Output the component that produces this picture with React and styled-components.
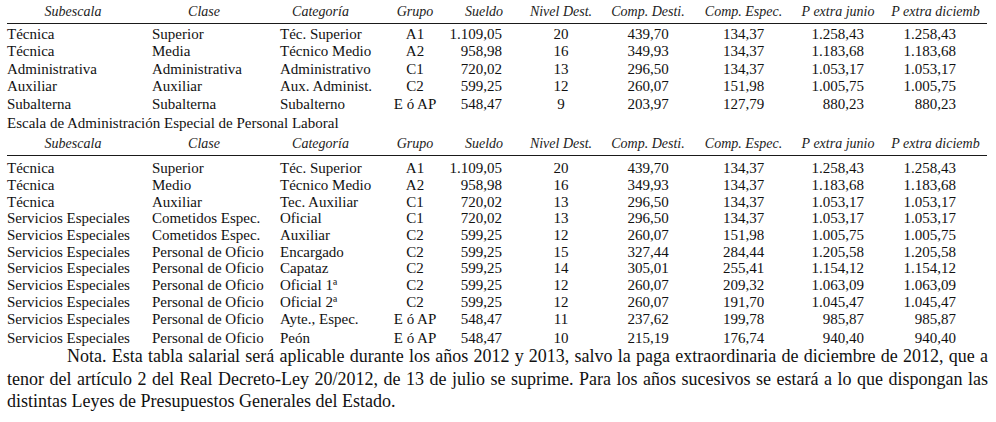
import React from 'react';
import styled, { createGlobalStyle } from 'styled-components';

const GlobalStyle = createGlobalStyle`
  html, body {
    margin: 0;
    padding: 0;
    background: #ffffff;
  }
  body {
    font-family: "Liberation Serif", "Times New Roman", serif;
    color: #111111;
  }
`;

// column layout: width, data alignment/padding, header padding (header is always centered)
const columns = [
  { key: 'subescala', title: 'Subescala', w: 132, align: 'left', pl: 0, pr: 0, hpl: 0 },
  { key: 'clase', title: 'Clase', w: 130, align: 'left', pl: 13, pr: 0, hpl: 0 },
  { key: 'categoria', title: 'Categoría', w: 103, align: 'left', pl: 11, pr: 0, hpl: 0 },
  { key: 'grupo', title: 'Grupo', w: 74, align: 'center', pl: 12, pr: 0, hpl: 12 },
  { key: 'sueldo', title: 'Sueldo', w: 64, align: 'right', pl: 0, pr: 8, hpl: 12 },
  { key: 'nivel', title: 'Nivel Dest.', w: 95, align: 'center', pl: 7, pr: 0, hpl: 7 },
  { key: 'desti', title: 'Comp. Desti.', w: 86, align: 'center', pl: 0, pr: 0, hpl: 0 },
  { key: 'espec', title: 'Comp. Espec.', w: 105, align: 'center', pl: 0, pr: 0, hpl: 0 },
  { key: 'junio', title: 'P extra junio', w: 84, align: 'right', pl: 0, pr: 16, hpl: 0 },
  { key: 'diciembre', title: 'P extra diciemb', w: 107, align: 'right', pl: 0, pr: 31, hpl: 4 },
];

const template = columns.map((c) => `${c.w}px`).join(' ');

const generalRows = [
  ['Técnica', 'Superior', 'Téc. Superior', 'A1', '1.109,05', '20', '439,70', '134,37', '1.258,43', '1.258,43'],
  ['Técnica', 'Media', 'Técnico Medio', 'A2', '958,98', '16', '349,93', '134,37', '1.183,68', '1.183,68'],
  ['Administrativa', 'Administrativa', 'Administrativo', 'C1', '720,02', '13', '296,50', '134,37', '1.053,17', '1.053,17'],
  ['Auxiliar', 'Auxiliar', 'Aux. Administ.', 'C2', '599,25', '12', '260,07', '151,98', '1.005,75', '1.005,75'],
  ['Subalterna', 'Subalterna', 'Subalterno', 'E ó AP', '548,47', '9', '203,97', '127,79', '880,23', '880,23'],
];

const laboralRows = [
  ['Técnica', 'Superior', 'Téc. Superior', 'A1', '1.109,05', '20', '439,70', '134,37', '1.258,43', '1.258,43'],
  ['Técnica', 'Medio', 'Técnico Medio', 'A2', '958,98', '16', '349,93', '134,37', '1.183,68', '1.183,68'],
  ['Técnica', 'Auxiliar', 'Tec. Auxiliar', 'C1', '720,02', '13', '296,50', '134,37', '1.053,17', '1.053,17'],
  ['Servicios Especiales', 'Cometidos Espec.', 'Oficial', 'C1', '720,02', '13', '296,50', '134,37', '1.053,17', '1.053,17'],
  ['Servicios Especiales', 'Cometidos Espec.', 'Auxiliar', 'C2', '599,25', '12', '260,07', '151,98', '1.005,75', '1.005,75'],
  ['Servicios Especiales', 'Personal de Oficio', 'Encargado', 'C2', '599,25', '15', '327,44', '284,44', '1.205,58', '1.205,58'],
  ['Servicios Especiales', 'Personal de Oficio', 'Capataz', 'C2', '599,25', '14', '305,01', '255,41', '1.154,12', '1.154,12'],
  ['Servicios Especiales', 'Personal de Oficio', 'Oficial 1ª', 'C2', '599,25', '12', '260,07', '209,32', '1.063,09', '1.063,09'],
  ['Servicios Especiales', 'Personal de Oficio', 'Oficial 2ª', 'C2', '599,25', '12', '260,07', '191,70', '1.045,47', '1.045,47'],
  ['Servicios Especiales', 'Personal de Oficio', 'Ayte., Espec.', 'E ó AP', '548,47', '11', '237,62', '199,78', '985,87', '985,87'],
  ['Servicios Especiales', 'Personal de Oficio', 'Peón', 'E ó AP', '548,47', '10', '215,19', '176,74', '940,40', '940,40'],
];

const SalaryTable = ({ rows, rowHeight, bodyTop, lastGap }) => (
  <Table>
    <HeadRow>
      {columns.map((c) => (
        <HeadCell key={c.key} $pl={c.hpl}>
          {c.title}
        </HeadCell>
      ))}
    </HeadRow>
    <Body $top={bodyTop}>
      {rows.map((row, i) => (
        <Row key={i} $h={rowHeight} $gap={i === rows.length - 1 ? lastGap : 0}>
          {row.map((value, j) => (
            <Cell
              key={columns[j].key}
              $align={columns[j].align}
              $pl={columns[j].pl}
              $pr={columns[j].pr}
            >
              {value}
            </Cell>
          ))}
        </Row>
      ))}
    </Body>
  </Table>
);

const App = () => (
  <>
    <GlobalStyle />
    <Page>
      <SalaryTable rows={generalRows} rowHeight={17.25} bodyTop={2} lastGap={0.5} />
      <Caption>Escala de Administración Especial de Personal Laboral</Caption>
      <SalaryTable rows={laboralRows} rowHeight={16.7} bodyTop={4.6} lastGap={3} />
      <Note>
        <NoteLine $first>
          Nota. Esta tabla salarial será aplicable durante los años 2012 y 2013, salvo la paga
          extraordinaria de diciembre de 2012, que a
        </NoteLine>
        <NoteLine>
          tenor del artículo 2 del Real Decreto-Ley 20/2012, de 13 de julio se suprime. Para los
          años sucesivos se estará a lo que dispongan las
        </NoteLine>
        <NoteLine $last>distintas Leyes de Presupuestos Generales del Estado.</NoteLine>
      </Note>
    </Page>
  </>
);

const Page = styled.div`
  width: 996px;
  height: 422px;
  box-sizing: border-box;
  padding: 0 8px 0 7px;
  overflow: hidden;
`;

const Table = styled.div`
  width: 980px;
`;

const HeadRow = styled.div`
  display: grid;
  grid-template-columns: ${template};
  padding: 3px 0;
  border-bottom: 1px solid #1a1a1a;
`;

const HeadCell = styled.div`
  padding-left: ${(p) => p.$pl}px;
  text-align: center;
  font-style: italic;
  font-size: 14px;
  line-height: 17px;
  color: #222222;
  white-space: nowrap;
`;

const Body = styled.div`
  padding-top: ${(p) => p.$top}px;
`;

const Row = styled.div`
  display: grid;
  grid-template-columns: ${template};
  height: ${(p) => p.$h}px;
  margin-top: ${(p) => p.$gap}px;
  align-items: center;
`;

const Cell = styled.div`
  padding-left: ${(p) => p.$pl}px;
  padding-right: ${(p) => p.$pr}px;
  text-align: ${(p) => p.$align};
  font-size: 15px;
  line-height: 17px;
  white-space: nowrap;
`;

const Caption = styled.div`
  padding-top: 1px;
  font-size: 15px;
  line-height: 18px;
`;

const Note = styled.div`
  margin-top: -1.5px;
  width: 981px;
  font-size: 18px;
  line-height: 22.5px;
`;

const NoteLine = styled.div`
  text-indent: ${(p) => (p.$first ? '60px' : '0')};
  text-align: justify;
  text-align-last: ${(p) => (p.$last ? 'left' : 'justify')};
  white-space: nowrap;
`;

export default App;
